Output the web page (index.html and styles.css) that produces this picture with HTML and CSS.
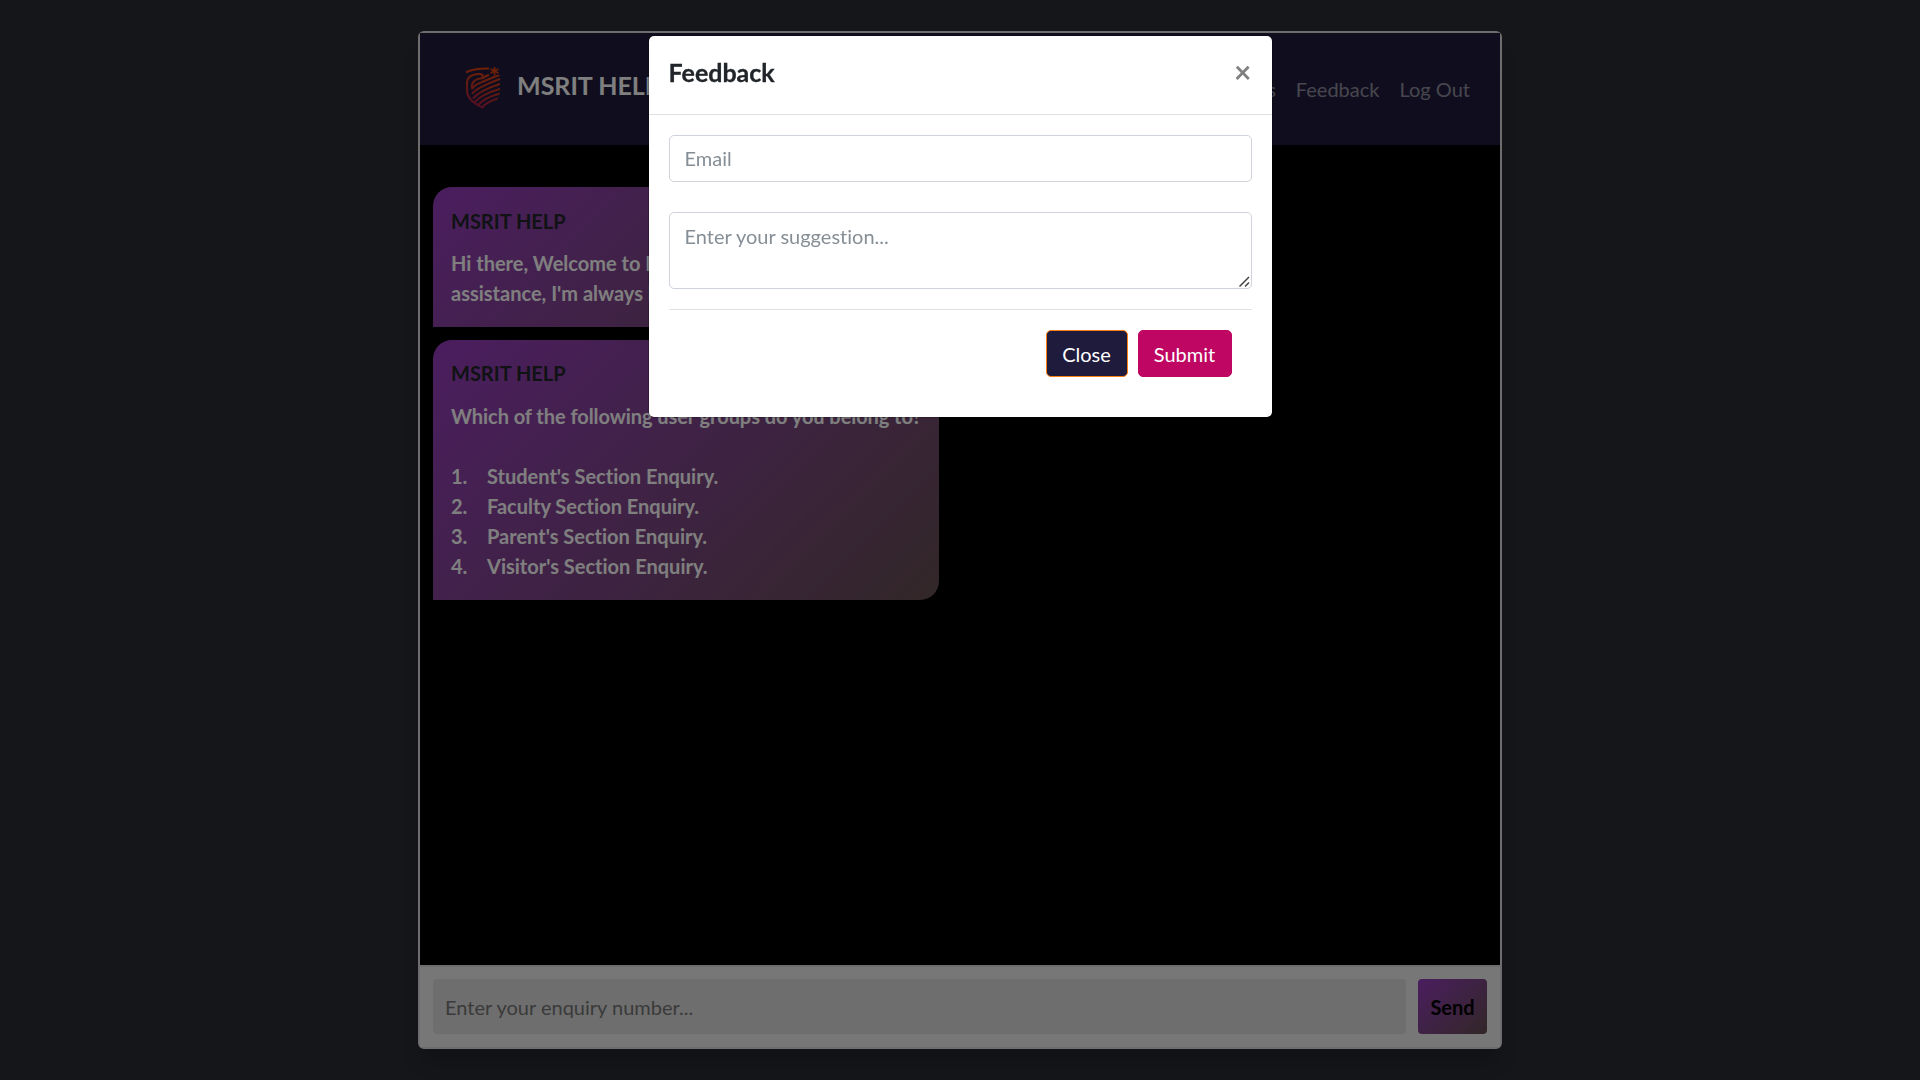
FILE: index.html
```html
<!DOCTYPE html>
<html lang="en">
<head>
<meta charset="utf-8">
<title>MSRIT HELP</title>
<link rel="stylesheet" href="styles.css">
</head>
<body>
<section class="chat">
  <header class="navbar">
    <a class="brand">
      <svg class="logo" viewBox="0 0 36 44" fill="none" stroke="url(#g)" stroke-width="2.1">
        <defs><linearGradient id="g" gradientUnits="userSpaceOnUse" x1="22" y1="4" x2="10" y2="44"><stop offset="0" stop-color="#e0400e"/><stop offset=".5" stop-color="#c03228"/><stop offset="1" stop-color="#a01850"/></linearGradient>
        <clipPath id="c"><path d="M0 5H25V9H35V24Q35 37 18.500 43Q1 37 0 24Z"/></clipPath></defs>
        <path d="M1 6.500Q7 2.500 24 2.500"/>
        <path d="M29.500 1V9M25.500 3L33.500 7M25.500 7L33.500 3" stroke-width="1.700"/>
        <g clip-path="url(#c)">
          <path d="M17 11Q19 7.500 13 8Q2 9 2 17V24Q2 35 18.500 42"/>
          <path d="M7 23V19Q8 13 18 12Q20 10 24 9"/>
          <path d="M7 23Q9 19 17 16L35 8.500M7 28Q11 22 35 13M8 32.500Q14 25 35 18M10 36Q17 28 35 23M13 39Q19 32 35 27.500M17 41.500Q22 35.500 35 32"/>
        </g>
      </svg>
      <span>MSRIT HELP</span>
    </a>
    <nav class="links"><a>About Us</a><a>Feedback</a><a>Log Out</a></nav>
  </header>
  <main class="messages">
    <div class="bubble">
      <div class="name">MSRIT HELP</div>
      <div class="text">Hi there, Welcome to MSRIT HELP. For any assistance, I'm always here to help you.</div>
    </div>
    <div class="bubble">
      <div class="name">MSRIT HELP</div>
      <div class="text question">Which of the following user groups do you belong to?</div>
      <ol class="options">
        <li><span>1.</span>Student's Section Enquiry.</li>
        <li><span>2.</span>Faculty Section Enquiry.</li>
        <li><span>3.</span>Parent's Section Enquiry.</li>
        <li><span>4.</span>Visitor's Section Enquiry.</li>
      </ol>
    </div>
  </main>
  <form class="composer">
    <input class="enquiry" type="text" placeholder="Enter your enquiry number...">
    <button class="send" type="button">Send</button>
  </form>
</section>
<div class="backdrop">
  <div class="modal">
    <div class="modal-header">
      <h5 class="modal-title">Feedback</h5>
      <button class="dismiss" type="button" aria-label="Close">×</button>
    </div>
    <form class="modal-body">
      <input class="field email" type="email" placeholder="Email">
      <div class="area-wrap">
        <textarea class="field area" placeholder="Enter your suggestion..."></textarea>
        <svg class="grip" viewBox="0 0 11 11" fill="none" stroke="#444" stroke-width="1.5"><path d="M.5 10.500L10 1M6 10.500L10 6.500"/></svg>
      </div>
      <div class="modal-footer">
        <button class="btn close" type="button">Close</button>
        <button class="btn submit" type="button">Submit</button>
      </div>
    </form>
  </div>
</div>
</body>
</html>
```
FILE: styles.css
```css
* { box-sizing: border-box; }
body {
  margin: 0;
  height: 1080px;
  overflow: hidden;
  display: flex;
  justify-content: center;
  align-items: center;
  background: #282c34;
  font: 20px/30px Lato, sans-serif;
  font-variant-ligatures: none;
  color: #212529;
}
input, textarea, button { font: inherit; font-variant-ligatures: none; }
.chat {
  width: 1084px;
  height: 1018px;
  display: flex;
  flex-direction: column;
  border: 2px solid #ddd;
  border-radius: 6px;
  background: #000;
  box-shadow: 0 19px 19px -6px rgba(0, 0, 0, .2);
}
.navbar {
  height: 112px;
  flex: none;
  display: flex;
  justify-content: space-between;
  align-items: center;
  padding: 0 30px 0 45px;
  background: #201c3c;
}
.brand {
  display: flex;
  align-items: center;
  gap: 16px;
  font-size: 25px;
  font-weight: 700;
  color: #fff;
  padding-bottom: 8px;
}
.logo { width: 36px; height: 44px; margin-top: 6px; }
.links { display: flex; gap: 20px; color: rgba(255, 255, 255, .5); }
.messages { flex: 1; padding: 42px 13px; }
.bubble {
  width: 506px;
  padding: 19px 18px;
  margin-bottom: 13px;
  border-radius: 19px 19px 19px 0;
  background: linear-gradient(135deg, #963cbe, #644e50);
  color: #fff;
  font-weight: 700;
}
.bubble + .bubble { padding-top: 18px; }
.bubble + .bubble .name { margin-bottom: 13px; }
.name { color: #212529; margin-bottom: 12px; }
.question { white-space: nowrap; letter-spacing: -.06px; }
.options { list-style: none; margin: 30px 0 0; padding: 0; }
.options li { display: flex; }
.options span { width: 36px; }
.composer {
  display: flex;
  gap: 12px;
  padding: 12px 13px 13px;
  border-top: 2px solid #ddd;
  background: #eee;
}
.enquiry {
  flex: 1;
  height: 55px;
  padding: 0 12px;
  border: 0;
  border-radius: 4px;
  background: #ddd;
}
.enquiry::placeholder { color: #757575; }
.send {
  width: 69px;
  padding: 0;
  border: 0;
  border-radius: 4px;
  background: linear-gradient(135deg, #963cbe, #644e50);
  color: #000;
  font-weight: 700;
}
.backdrop {
  position: fixed;
  inset: 0;
  display: flex;
  justify-content: center;
  align-items: flex-start;
  padding-top: 35px;
  background: rgba(0, 0, 0, .5);
}
.modal {
  width: 625px;
  background: #fff;
  background-clip: padding-box;
  border: 1px solid rgba(0, 0, 0, .2);
  border-radius: 6px;
}
.modal-header {
  height: 79px;
  display: flex;
  justify-content: space-between;
  align-items: flex-start;
  padding: 17px 20px;
  border-bottom: 1px solid #dee2e6;
}
.modal-title {
  margin: 0;
  font-size: 25px;
  line-height: 38px;
  font-weight: 700;
  -webkit-text-stroke: .3px #212529;
}
.dismiss {
  border: 0;
  padding: 0;
  background: none;
  color: #808080;
  font-size: 30px;
  line-height: 37px;
  font-weight: 700;
}
.modal-body { padding: 20px; display: flex; flex-direction: column; }
.field {
  width: 100%;
  height: 47px;
  padding: 6px 15px 8px;
  border: 1px solid #ced4da;
  border-radius: 5px;
  background: #fff;
}
.field::placeholder { color: #868e96; }
.area-wrap { position: relative; height: 77px; margin: 30px 0 20px; }
.area { display: block; height: 77px; padding: 8px 15px; resize: none; }
.grip { position: absolute; right: 2px; bottom: 2px; width: 11px; height: 11px; }
.modal-footer {
  display: flex;
  justify-content: flex-end;
  gap: 10px;
  padding: 20px;
  border-top: 1px solid #dee2e6;
}
.btn { height: 47px; padding: 0 15px; border: 1px solid; border-radius: 5px; color: #fff; }
.close { width: 82px; background: #1f1b3c; border-color: #fd7e14; }
.submit { width: 94px; background: #be0662; border-color: #be0662; }
```
